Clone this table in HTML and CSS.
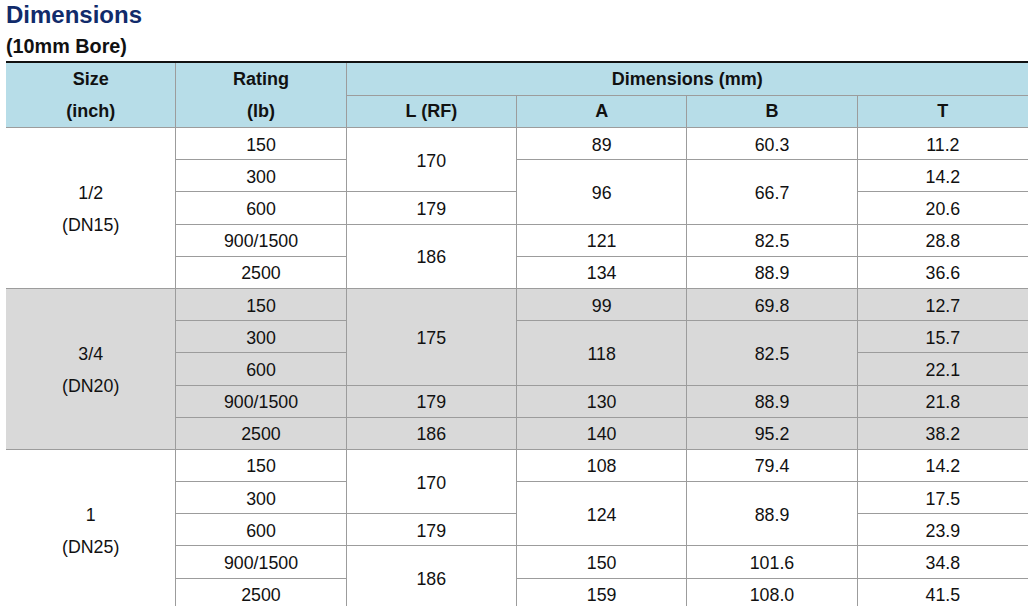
FILE: index.html
```html
<!DOCTYPE html>
<html>
<head>
<meta charset="utf-8">
<link rel="stylesheet" href="styles.css">
</head>
<body>
<h1 class="title">Dimensions</h1>
<h2 class="subtitle">(10mm Bore)</h2>
<table class="dims">
  <colgroup>
    <col class="c"><col class="c"><col class="c"><col class="c"><col class="c"><col class="c">
  </colgroup>
  <thead>
    <tr class="h1row">
      <th rowspan="2" class="two">Size<br>(inch)</th>
      <th rowspan="2" class="two">Rating<br>(lb)</th>
      <th colspan="4" class="last">Dimensions (mm)</th>
    </tr>
    <tr class="h2row">
      <th>L (RF)</th>
      <th>A</th>
      <th>B</th>
      <th class="last">T</th>
    </tr>
  </thead>
  <tbody class="grp">
    <tr><td rowspan="5" class="two">1/2<br>(DN15)</td><td>150</td><td rowspan="2">170</td><td>89</td><td>60.3</td><td class="last">11.2</td></tr>
    <tr><td>300</td><td rowspan="2">96</td><td rowspan="2">66.7</td><td class="last">14.2</td></tr>
    <tr><td>600</td><td>179</td><td class="last">20.6</td></tr>
    <tr><td>900/1500</td><td rowspan="2">186</td><td>121</td><td>82.5</td><td class="last">28.8</td></tr>
    <tr><td>2500</td><td>134</td><td>88.9</td><td class="last">36.6</td></tr>
  </tbody>
  <tbody class="grp shaded">
    <tr><td rowspan="5" class="two">3/4<br>(DN20)</td><td>150</td><td rowspan="3">175</td><td>99</td><td>69.8</td><td class="last">12.7</td></tr>
    <tr><td>300</td><td rowspan="2">118</td><td rowspan="2">82.5</td><td class="last">15.7</td></tr>
    <tr><td>600</td><td class="last">22.1</td></tr>
    <tr><td>900/1500</td><td>179</td><td>130</td><td>88.9</td><td class="last">21.8</td></tr>
    <tr><td>2500</td><td>186</td><td>140</td><td>95.2</td><td class="last">38.2</td></tr>
  </tbody>
  <tbody class="grp">
    <tr><td rowspan="5" class="two">1<br>(DN25)</td><td>150</td><td rowspan="2">170</td><td>108</td><td>79.4</td><td class="last">14.2</td></tr>
    <tr><td>300</td><td rowspan="2">124</td><td rowspan="2">88.9</td><td class="last">17.5</td></tr>
    <tr><td>600</td><td>179</td><td class="last">23.9</td></tr>
    <tr><td>900/1500</td><td rowspan="2">186</td><td>150</td><td>101.6</td><td class="last">34.8</td></tr>
    <tr><td>2500</td><td>159</td><td>108.0</td><td class="last">41.5</td></tr>
  </tbody>
</table>
</body>
</html>
```

FILE: styles.css
```css
html, body {
  margin: 0;
  padding: 0;
  background: #ffffff;
}
body {
  padding: 0 4px 0 6px;
  font-family: "Liberation Sans", Arial, sans-serif;
  color: #111111;
}
.title {
  margin: 1px 0 0 0;
  font-size: 24px;
  line-height: 28px;
  font-weight: bold;
  color: #112b6b;
}
.subtitle {
  margin: 6px 0 0 0;
  font-size: 19.8px;
  line-height: 22px;
  font-weight: bold;
  color: #111111;
}
.dims {
  margin-top: 4px;
  width: 1022px;
  table-layout: fixed;
  border-collapse: separate;
  border-spacing: 0;
  border-top: 2px solid #111111;
  font-size: 17.8px;
}
.dims .c {
  width: 170.33px;
}
.dims th,
.dims td {
  padding: 0;
  text-align: center;
  vertical-align: middle;
  border-right: 1px solid #9c9c9c;
  border-bottom: 1px solid #9c9c9c;
  line-height: 20px;
}
.dims tbody td {
  padding-top: 2px;
}
.dims .last {
  border-right: none;
}
.dims thead th {
  background: #b7dde8;
  font-weight: bold;
  font-size: 18px;
}
.dims .h1row,
.dims .h2row {
  height: 32px;
}
.dims tbody tr {
  height: 32.2px;
}
.dims .two {
  line-height: 32px;
}
.dims .shaded td {
  background: #d9d9d9;
}
```
